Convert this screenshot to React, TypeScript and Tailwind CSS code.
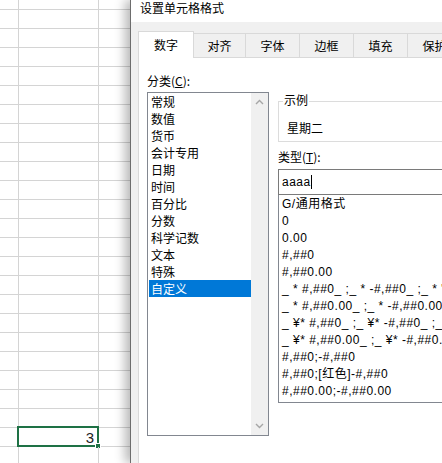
import React from "react";

const categories = [
    "常规",
    "数值",
    "货币",
    "会计专用",
    "日期",
    "时间",
    "百分比",
    "分数",
    "科学记数",
    "文本",
    "特殊",
    "自定义",
];

const formats = [
    "G/通用格式",
    "0",
    "0.00",
    "#,##0",
    "#,##0.00",
    '_ * #,##0_ ;_ * -#,##0_ ;_ * "-"_ ;_ @_ ',
    '_ * #,##0.00_ ;_ * -#,##0.00_ ;_ * "-"??_ ;_ @_ ',
    '_ ¥* #,##0_ ;_ ¥* -#,##0_ ;_ ¥* "-"_ ;_ @_ ',
    '_ ¥* #,##0.00_ ;_ ¥* -#,##0.00_ ;_ ¥* "-"??_ ;_ @_ ',
    "#,##0;-#,##0",
    "#,##0;[红色]-#,##0",
    "#,##0.00;-#,##0.00",
];

const tabs = [
    { label: "对齐", w: "w-[52px]" },
    { label: "字体", w: "w-[54px]" },
    { label: "边框", w: "w-[54px]" },
    { label: "填充", w: "w-[54px]" },
    { label: "保护", w: "w-[54px]" },
];

function Sheet() {
    const rows = Array.from({ length: 24 }, (_, i) => i + 1);
    return (
        <div className="w-[130px] shrink-0 flex flex-col bg-white">
            <div className="h-[10px] shrink-0 flex border-b border-[#d4d4d4]">
                <div className="w-[19px] border-r border-[#d4d4d4]" />
                <div className="w-[80px] border-r border-[#d4d4d4]" />
                <div className="flex-1" />
            </div>
            {rows.map((k) => (
                <div key={k} className="h-[19px] shrink-0 flex border-b border-[#d4d4d4]">
                    <div className="w-[19px] border-r border-[#d4d4d4]" />
                    <div className="w-[80px] border-r border-[#d4d4d4] relative">
                        {k === 23 && (
                            <>
                                <div className="absolute -left-[2px] -top-[2px] -right-[1px] -bottom-[1px] border-2 border-[#1e7145]" />
                                <div className="absolute -right-[3px] -bottom-[3px] w-[6px] h-[6px] bg-[#1e7145] border border-white" />
                                <div className="h-full flex items-center justify-end pr-[4px] text-[15px] leading-none font-['Liberation_Sans',sans-serif] font-light text-[#222]">
                                    3
                                </div>
                            </>
                        )}
                    </div>
                    <div className="flex-1" />
                </div>
            ))}
        </div>
    );
}

function Chevron({ up }: { up?: boolean }) {
    return (
        <svg width="9" height="6" viewBox="0 0 9 6">
            <polyline
                points={up ? "1,5 4.5,1.5 8,5" : "1,1 4.5,4.5 8,1"}
                fill="none"
                stroke="#a6a6a6"
                strokeWidth="1.4"
            />
        </svg>
    );
}

export default function App() {
    return (
        <div className="w-[442px] h-[463px] overflow-hidden flex bg-white text-[12px] text-black font-['Noto_Sans_CJK_SC',sans-serif]">
            <Sheet />
            <div className="relative z-10 flex-1 min-w-0 flex flex-col border-l border-[#6d6d6d] bg-[#f0f0f0] shadow-[-5px_0_10px_rgba(0,0,0,0.28)]">
                {/* title bar */}
                <div className="h-[22px] shrink-0 bg-white pl-[9px] leading-[16px]">
                    设置单元格格式
                </div>

                <div className="flex-1 flex flex-col pl-[7px] pt-[9px] min-h-0">
                    {/* tabs */}
                    <div className="flex items-end shrink-0">
                        <div className="relative z-10 -mb-px shrink-0 w-[56px] h-[27px] bg-white border border-b-0 border-[#d9d9d9] flex items-center justify-center pb-[1px]">
                            数字
                        </div>
                        {tabs.map((t) => (
                            <div
                                key={t.label}
                                className={`${t.w} shrink-0 h-[24px] border-t border-r border-[#d9d9d9] flex items-center justify-center whitespace-nowrap`}
                            >
                                {t.label}
                            </div>
                        ))}
                    </div>

                    {/* panel */}
                    <div className="flex-1 bg-white border-t border-l border-[#d9d9d9] flex pt-[15px] pl-[8px] overflow-hidden">
                        <div className="w-[122px] shrink-0 flex flex-col">
                            <div className="leading-[16px]">
                                分类(<span className="underline">C</span>):
                            </div>
                            <div className="mt-[3px] h-[344px] border border-[#828790] flex">
                                <div className="flex-1 flex flex-col">
                                    {categories.map((c) => (
                                        <div
                                            key={c}
                                            className={`h-[17px] ml-[1px] pl-[2px] leading-[17px] ${
                                                c === "自定义" ? "bg-[#0078d7] text-white" : ""
                                            }`}
                                        >
                                            {c}
                                        </div>
                                    ))}
                                </div>
                                <div className="w-[17px] bg-[#f0f0f0] flex flex-col items-center justify-between py-[6px]">
                                    <Chevron up />
                                    <Chevron />
                                </div>
                            </div>
                        </div>

                        <div className="w-[200px] shrink-0 ml-[9px] flex flex-col">
                            <div className="mt-[28px] border border-r-0 border-[#dcdcdc] pb-[5px] pl-[4px]">
                                <div className="-mt-[10px] w-fit bg-white px-[1px] leading-[16px]">示例</div>
                                <div className="mt-[12px] pl-[4px] leading-[16px]">星期二</div>
                            </div>
                            <div className="mt-[7px] leading-[16px]">
                                类型(<span className="underline">T</span>):
                            </div>
                            <div className="mt-[4px] h-[26px] border border-r-0 border-[#7a7a7a] pl-[3px] flex items-center font-['Liberation_Sans','Noto_Sans_CJK_SC',sans-serif] text-[12px] tracking-[0.5px]">
                                aaaa
                                <span className="inline-block w-px h-[14px] bg-black" />
                            </div>
                            <div className="h-[208px] border border-t-0 border-r-0 border-[#828790] pl-[3px] pt-[1px] font-['Liberation_Sans','Noto_Sans_CJK_SC',sans-serif] tracking-[0.5px]">
                                {formats.map((f) => (
                                    <div key={f} className="h-[17px] leading-[17px] whitespace-pre">
                                        {f}
                                    </div>
                                ))}
                            </div>
                        </div>
                    </div>
                </div>
            </div>
        </div>
    );
}
